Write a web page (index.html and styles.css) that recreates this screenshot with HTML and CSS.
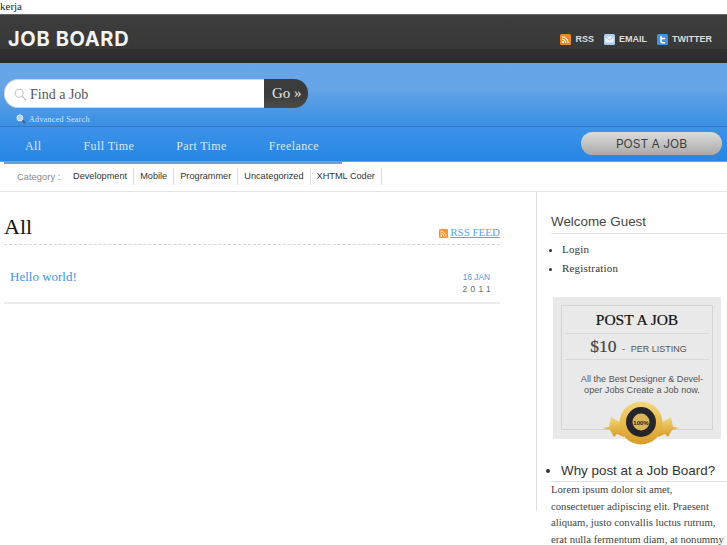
FILE: index.html
```html
<!DOCTYPE html>
<html lang="en">
<head>
    <meta charset="UTF-8">
    <title>Job Board</title>
    <link rel="stylesheet" href="styles.css">
</head>
<body>
    <div class="site-title">kerja</div>

    <div class="top-bar">
        <a class="logo">JOB BOARD</a>
        <div class="social">
            <a class="social-link">
                <svg class="social-icon" viewBox="0 0 11 11"><rect width="11" height="11" rx="1.5" fill="#f08a1c"/><circle cx="3" cy="8" r="1.1" fill="#fff"/><path d="M2 5.2a3.8 3.8 0 0 1 3.8 3.8M2 2.8A6.2 6.2 0 0 1 8.2 9" fill="none" stroke="#fff" stroke-width="1.1"/></svg>
                RSS
            </a>
            <a class="social-link">
                <svg class="social-icon" viewBox="0 0 11 11"><rect width="11" height="11" rx="1.5" fill="#a9cdf3"/><rect x="1.5" y="2.5" width="8" height="6" fill="#eef5fd"/><path d="M1.5 2.5l4 3.5 4-3.5" fill="none" stroke="#7ea8d8" stroke-width="0.8"/></svg>
                EMAIL
            </a>
            <a class="social-link">
                <svg class="social-icon" viewBox="0 0 11 11"><rect width="11" height="11" rx="1.5" fill="#3d94e6"/><path d="M4 2v5.2c0 1 .6 1.5 1.6 1.5H8M4 4.6h4" fill="none" stroke="#fff" stroke-width="1.5"/></svg>
                TWITTER
            </a>
        </div>
    </div>

    <div class="search-area">
        <div class="search-form">
            <div class="search-input">
                <svg class="search-icon" viewBox="0 0 13 13"><circle cx="5.2" cy="5.2" r="4" fill="none" stroke="#c4c4c4" stroke-width="1.1"/><path d="M8.2 8.2l4 4" stroke="#c4c4c4" stroke-width="1.4"/></svg>
                Find a Job
            </div>
            <div class="search-btn">Go &raquo;</div>
        </div>
        <a class="advanced">
            <svg class="advanced-icon" viewBox="0 0 11 11"><path d="M6.5 6.5l3.6 3.6" stroke="#4d5d70" stroke-width="2"/><circle cx="4.3" cy="4.3" r="3.3" fill="#b9d3ee" stroke="#e6eef8" stroke-width="1.1"/></svg>
            Advanced Search
        </a>
    </div>

    <div class="nav-bar">
        <ul class="nav">
            <li>All</li>
            <li>Full Time</li>
            <li>Part Time</li>
            <li>Freelance</li>
        </ul>
        <a class="post-btn">POST A JOB</a>
    </div>

    <div class="nav-tab"></div>
    <div class="category-bar">
        <span class="category-label">Category :</span>
        <a>Development</a>
        <a>Mobile</a>
        <a>Programmer</a>
        <a>Uncategorized</a>
        <a>XHTML Coder</a>
    </div>

    <div class="content">
        <div class="main">
            <div class="main-head">
                <h1>All</h1>
                <a class="rss-feed">
                    <svg class="feed-icon" viewBox="0 0 8 8"><rect width="8" height="8" rx="1" fill="#f0963a"/><circle cx="2" cy="6" r=".8" fill="#fff"/><path d="M1.2 3.6A3.2 3.2 0 0 1 4.4 6.8M1.2 1.8a5 5 0 0 1 5 5" fill="none" stroke="#fff" stroke-width=".7"/></svg>
                    <span>RSS FEED</span>
                </a>
            </div>
            <div class="job-row">
                <a class="job-title">Hello world!</a>
                <div class="job-date">
                    <div class="job-day">16 JAN</div>
                    <div class="job-year">2011</div>
                </div>
            </div>
        </div>

        <div class="sidebar">
            <h3 class="welcome">Welcome Guest</h3>
            <ul class="login-list">
                <li>Login</li>
                <li>Registration</li>
            </ul>

            <div class="promo">
                <div class="promo-inner">
                    <div class="promo-title">POST A JOB</div>
                    <div class="promo-price"><b>$10</b> <span class="promo-dash">-</span> <span>PER LISTING</span></div>
                    <p class="promo-text">All the Best Designer &amp; Devel-<br>oper Jobs Create a Job now.</p>
                </div>
                <svg class="medal" viewBox="0 0 76 44">
                    <defs>
                        <linearGradient id="gold" x1="0" y1="0" x2="0" y2="1">
                            <stop offset="0" stop-color="#f3d77c"/>
                            <stop offset="1" stop-color="#d99c25"/>
                        </linearGradient>
                    </defs>
                    <path d="M0 27l6-1 2-10 14 8-1 12-7-3-3 3-4-7z" fill="url(#gold)"/>
                    <path d="M76 27l-6-1-2-10-14 8 1 12 7-3 3 3 4-7z" fill="url(#gold)"/>
                    <circle cx="38" cy="22" r="21.5" fill="url(#gold)"/>
                    <circle cx="38" cy="21" r="15" fill="#26262a"/>
                    <circle cx="38" cy="21" r="8.5" fill="#d8b659"/>
                    <text class="medal-text" x="38" y="23.5" text-anchor="middle">100%</text>
                </svg>
            </div>

            <ul class="why-list">
                <li>Why post at a Job Board?</li>
            </ul>
            <p class="why-text">Lorem ipsum dolor sit amet, consectetuer adipiscing elit. Praesent aliquam, justo convallis luctus rutrum, erat nulla fermentum diam, at nonummy</p>
        </div>
    </div>
</body>
</html>
```

FILE: styles.css
```css
html, body {
    margin: 0;
    padding: 0;
    height: 545px;
    overflow: hidden;
    background-color: #fff;
}

body {
    font-family: "Liberation Serif", serif;
}

a {
    text-decoration: none;
}

.site-title {
    height: 14px;
    font-size: 11px;
    line-height: 13px;
    color: #222;
}

.top-bar {
    height: 49px;
    box-sizing: border-box;
    border-top: 1px solid #666;
    background: linear-gradient(#3d3d3d, #383838 70%, #303030 72%, #2b2b2b);
    display: flex;
    justify-content: space-between;
    align-items: center;
    padding: 0 15px 1px 8px;
}

.logo {
    font-family: Inter, sans-serif;
    font-weight: 700;
    font-size: 20px;
    letter-spacing: .65px;
    color: #f4f4f4;
}

.social {
    display: flex;
    gap: 10px;
    padding-top: 1px;
}

.social-link {
    display: flex;
    align-items: center;
    gap: 4px;
    font-family: "Liberation Sans", sans-serif;
    font-weight: 700;
    font-size: 9px;
    color: #ddd;
}

.social-icon {
    width: 11px;
    height: 11px;
}

.search-area {
    height: 63px;
    box-sizing: border-box;
    padding: 16px 0 0 4px;
    background: linear-gradient(#66a6e8, #64a4e7 40%, #3a8fe4);
}

.search-form {
    display: flex;
    width: 304px;
    height: 29px;
}

.search-input {
    width: 260px;
    box-sizing: border-box;
    display: flex;
    align-items: center;
    gap: 3px;
    padding: 2px 0 0 9px;
    background-color: #fff;
    border: 1px solid #d5d5d5;
    border-right: none;
    border-radius: 14px 0 0 14px;
    font-size: 14px;
    color: #555;
}

.search-icon {
    width: 13px;
    height: 13px;
}

.search-btn {
    width: 44px;
    padding-left: 8px;
    box-sizing: border-box;
    line-height: 28px;
    background: linear-gradient(#3c3c3c, #3a3a3a 50%, #4c4c4c);
    border-radius: 0 14px 14px 0;
    font-size: 15px;
    color: #e6e6e6;
}

.advanced {
    display: flex;
    align-items: center;
    gap: 3px;
    margin: 6px 0 0 12px;
    font-size: 8px;
    letter-spacing: .3px;
    color: #cfe3f8;
}

.advanced-icon {
    width: 10px;
    height: 10px;
}

.nav-bar {
    height: 36px;
    box-sizing: border-box;
    border-top: 1px solid #3278c6;
    border-bottom: 1px solid #8d9aa8;
    background: linear-gradient(#3e92e6, #2686e6);
    display: flex;
    justify-content: space-between;
    align-items: center;
    padding: 0 5px 0 25px;
}

.nav {
    list-style: none;
    margin: 0;
    padding: 4px 0 0;
    display: flex;
    gap: 42px;
    font-size: 12px;
    letter-spacing: .4px;
    color: #d8e9fa;
}

.post-btn {
    width: 141px;
    height: 23px;
    margin-bottom: 2px;
    text-align: center;
    font-family: Inter, sans-serif;
    font-size: 12px;
    line-height: 23px;
    color: #3e3e3e;
    background: linear-gradient(#dcdcdc, #a9a9a9);
    border-radius: 12px;
}

.nav-tab {
    width: 338px;
    height: 2px;
    margin: 0 0 -2px 4px;
    background-color: #6c9fd4;
    position: relative;
}

.category-bar {
    height: 30px;
    box-sizing: border-box;
    border-bottom: 1px solid #e4e4e4;
    display: flex;
    align-items: center;
    padding-left: 17px;
    font-family: "Liberation Sans", sans-serif;
    font-size: 9.2px;
    color: #333;
}

.category-label {
    width: 56px;
    color: #888;
    letter-spacing: .1px;
}

.category-bar a {
    padding: 2px 6px;
    border-right: 1px solid #ddd;
    line-height: 13px;
}

.category-bar a:first-of-type {
    padding-left: 0;
}

.content {
    display: flex;
    align-items: flex-start;
}

.main {
    width: 496px;
    margin-left: 4px;
    padding-top: 21px;
}

.main-head {
    display: flex;
    justify-content: space-between;
    align-items: flex-end;
    height: 31px;
    border-bottom: 1px dashed #d5d5d5;
}

h1 {
    margin: 0 0 3px;
    font-size: 22px;
    font-weight: 400;
    line-height: 29px;
    color: #111;
}

.rss-feed {
    display: flex;
    align-items: center;
    gap: 2px;
    padding-bottom: 6px;
    font-size: 11px;
    color: #5aa5ee;
}

.rss-feed span {
    text-decoration: underline;
}

.feed-icon {
    width: 9px;
    height: 9px;
    margin-top: 2px;
}

.job-row {
    height: 59px;
    box-sizing: border-box;
    border-bottom: 2px solid #ececec;
    display: flex;
    justify-content: space-between;
    padding: 24px 10px 0 6px;
}

.job-title {
    font-size: 13px;
    color: #3f93e8;
}

.job-date {
    text-align: right;
    font-family: "Liberation Sans", sans-serif;
    font-size: 8.3px;
}

.job-day {
    color: #4a98e8;
    line-height: 12px;
    margin-top: 2px;
}

.job-year {
    color: #666;
    letter-spacing: 3.4px;
    margin-right: -4px;
    line-height: 12px;
}

.sidebar {
    width: 176px;
    height: 319px;
    margin-left: 36px;
    padding-left: 14px;
    border-left: 1px solid #e0e0e0;
    flex-shrink: 0;
}

.welcome {
    margin: 22px 0 0;
    height: 19px;
    border-bottom: 1px solid #ddd;
    font-family: "Liberation Sans", sans-serif;
    font-size: 13.4px;
    font-weight: 400;
    color: #444;
}

.login-list {
    margin: 6px 0 0;
    padding-left: 11px;
    font-size: 11px;
    line-height: 19px;
    letter-spacing: .2px;
    color: #333;
}

.promo {
    position: relative;
    width: 168px;
    height: 142px;
    margin: 19px 0 0 2px;
    padding: 8px;
    box-sizing: border-box;
    background-color: #e9e9e9;
}

.promo-inner {
    height: 125px;
    box-sizing: border-box;
    border: 1px solid #d3d3d3;
    padding: 0 3px;
    text-align: center;
}

.promo-title {
    height: 27px;
    border-bottom: 1px solid #d8d8d8;
    font-size: 15.5px;
    line-height: 27px;
    color: #111;
    -webkit-text-stroke: .2px #111;
}

.promo-price {
    height: 25px;
    border-bottom: 1px solid #d8d8d8;
    padding-left: 3px;
    font-family: "Liberation Sans", sans-serif;
    font-size: 9px;
    line-height: 25px;
    color: #555;
}

.promo-price b {
    font-family: "Liberation Serif", serif;
    font-size: 17.5px;
    font-weight: 400;
    color: #444;
    -webkit-text-stroke: .2px #444;
}

.promo-dash {
    margin: 0 3px;
}

.promo-text {
    margin: 14px 0 0;
    padding-left: 10px;
    font-family: "Liberation Sans", sans-serif;
    font-size: 9.1px;
    line-height: 10.5px;
    color: #555;
}

.medal {
    position: absolute;
    left: 50px;
    top: 104px;
    width: 76px;
    height: 44px;
}

.medal-text {
    font-family: "Liberation Sans", sans-serif;
    font-size: 6px;
    font-weight: 700;
    fill: #222;
}

.why-list {
    margin: 23px 0 0;
    padding: 0 0 1px 10px;
    border-bottom: 1px solid #ddd;
    font-family: "Liberation Sans", sans-serif;
    font-size: 13.4px;
    line-height: 18px;
    color: #333;
}

.why-text {
    margin: -1px 0 0;
    width: 175px;
    font-size: 10.7px;
    line-height: 16.5px;
    color: #444;
}
```
